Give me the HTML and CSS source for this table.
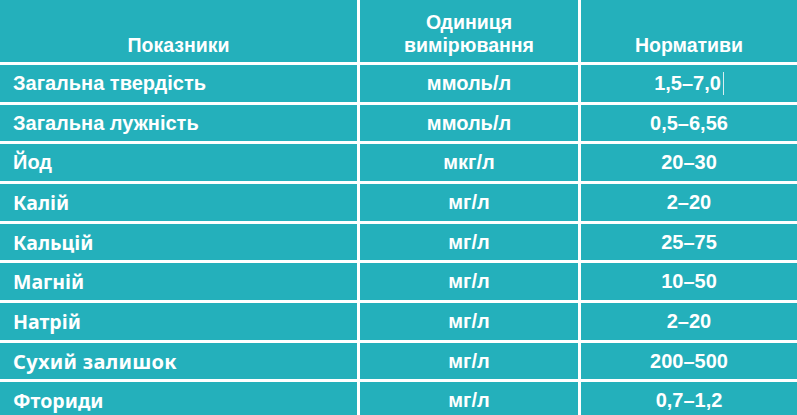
FILE: index.html
```html
<!DOCTYPE html>
<html lang="uk">
<head>
<meta charset="utf-8">
<link rel="stylesheet" href="styles.css">
</head>
<body>
<div class="table">
  <div class="cell head">Показники</div>
  <div class="cell head">Одиниця<br>вимірювання</div>
  <div class="cell head">Нормативи</div>

  <div class="cell name">Загальна твердість</div>
  <div class="cell">ммоль/л</div>
  <div class="cell">1,5–7,0<span class="caret"></span></div>

  <div class="cell name">Загальна лужність</div>
  <div class="cell">ммоль/л</div>
  <div class="cell">0,5–6,56</div>

  <div class="cell name">Йод</div>
  <div class="cell">мкг/л</div>
  <div class="cell">20–30</div>

  <div class="cell name alt">Калій</div>
  <div class="cell">мг/л</div>
  <div class="cell">2–20</div>

  <div class="cell name alt">Кальцій</div>
  <div class="cell">мг/л</div>
  <div class="cell">25–75</div>

  <div class="cell name alt">Магній</div>
  <div class="cell">мг/л</div>
  <div class="cell">10–50</div>

  <div class="cell name alt">Натрій</div>
  <div class="cell">мг/л</div>
  <div class="cell">2–20</div>

  <div class="cell name alt wide">Сухий залишок</div>
  <div class="cell">мг/л</div>
  <div class="cell">200–500</div>

  <div class="cell name alt">Фториди</div>
  <div class="cell">мг/л</div>
  <div class="cell">0,7–1,2</div>
</div>
</body>
</html>
```

FILE: styles.css
```css
html, body {
  margin: 0;
  padding: 0;
  background: #ffffff;
  overflow: hidden;
}

.table {
  display: grid;
  grid-template-columns: 357px 218px 216px;
  grid-template-rows: 62px 37px 36px 37px 37px 36px 37px 37px 36px 37px;
  column-gap: 3px;
  row-gap: 3px;
  width: 797px;
  font-family: "Liberation Sans", Arial, sans-serif;
  font-weight: 700;
  font-size: 20px;
  color: #ffffff;
}

.cell {
  background: #24b0bb;
  display: flex;
  align-items: center;
  justify-content: center;
  text-align: center;
  line-height: 23px;
}

.head {
  align-items: flex-end;
  padding-bottom: 5px;
  box-sizing: border-box;
  font-size: 19.5px;
}

.name {
  justify-content: flex-start;
  padding-left: 13px;
}

.alt {
  font-family: "Noto Sans", "Open Sans", sans-serif;
  font-weight: 700;
  font-size: 19.5px;
}

.wide {
  font-size: 20px;
  letter-spacing: 0.3px;
}

.caret {
  display: inline-block;
  width: 1px;
  height: 23px;
  margin-left: 2px;
  background: #d8eef0;
}
```
